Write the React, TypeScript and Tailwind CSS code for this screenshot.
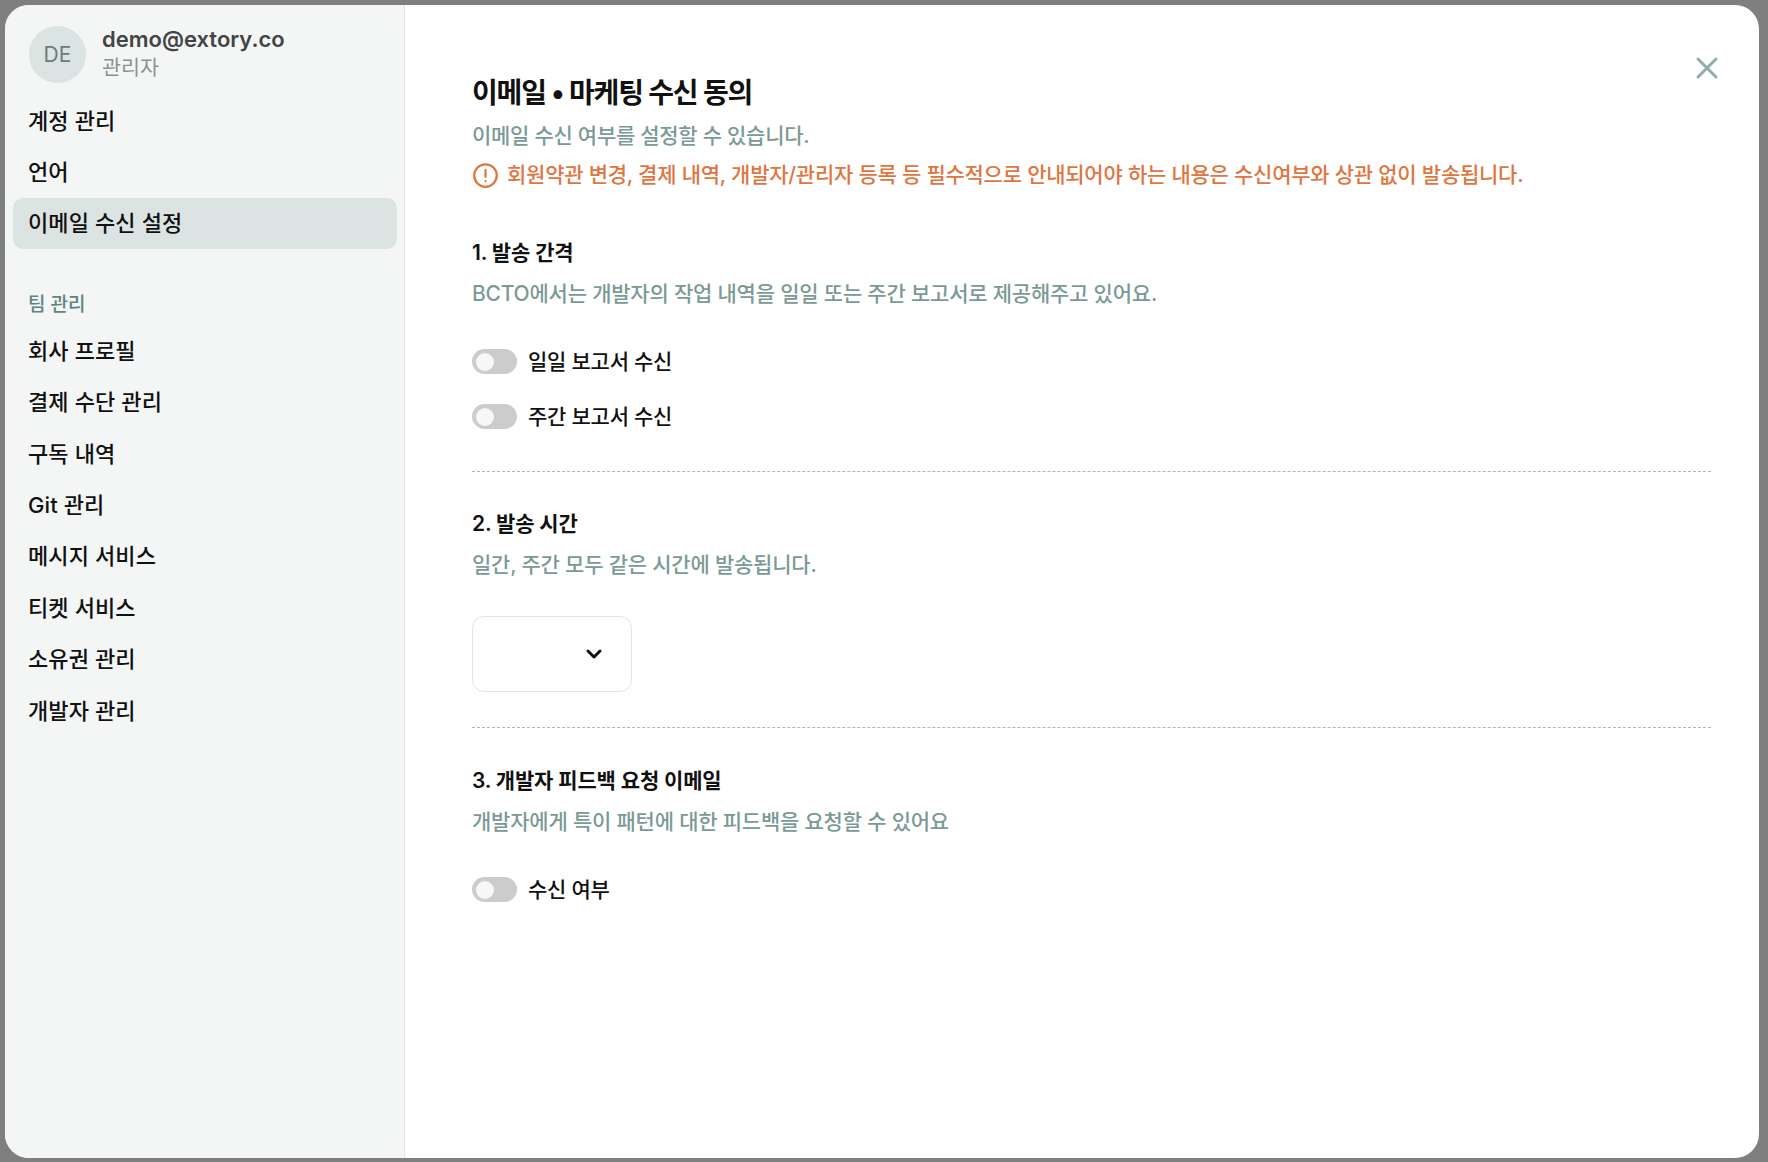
import React from 'react';
import { X, ChevronDown } from 'lucide-react';

const FONT = 'font-["Inter","Noto_Sans_CJK_KR",sans-serif]';

const accountItems = ['계정 관리', '언어', '이메일 수신 설정'];
const teamItems = ['회사 프로필', '결제 수단 관리', '구독 내역', 'Git 관리', '메시지 서비스', '티켓 서비스', '소유권 관리', '개발자 관리'];

const NavItem: React.FC<{ label: string; active?: boolean }> = ({ label, active }) => (
    <div className={`h-[51.4px] flex items-center px-[15px] pt-[1px] rounded-[10px] text-[22px] font-medium tracking-[0.1px] text-[#111] ${active ? 'bg-[#dce3e3]' : ''}`}>
        {label}
    </div>
);

const Toggle: React.FC<{ label: string }> = ({ label }) => (
    <div className="flex items-center gap-[11px] h-[25px]">
        <div className="w-[45px] h-[25px] rounded-full bg-[#cccccc] flex items-center pl-[4px]">
            <div className="w-[18px] h-[18px] rounded-full bg-[#f7f7f7]" />
        </div>
        <span className="text-[21px] font-medium tracking-[-0.25px] text-[#111]">{label}</span>
    </div>
);

const SectionHead: React.FC<{ title: string; desc: string }> = ({ title, desc }) => (
    <div>
        <h3 className="text-[21px] leading-[28px] font-semibold tracking-[-0.2px] text-[#111]">{title}</h3>
        <p className="mt-[13px] text-[21px] leading-[28px] font-medium tracking-[-0.22px] text-[#7b9a95]">{desc}</p>
    </div>
);

const App: React.FC = () => {
    return (
        <div className={`w-screen h-screen overflow-hidden bg-[#7f7f7f] p-[5px] pr-[9px] pb-[4px] ${FONT}`}>
            <div className="relative flex h-full bg-white rounded-[24px] overflow-hidden">
                <aside className="w-[400px] shrink-0 bg-[#f4f6f6] border-r border-[#dfe4e4] pl-[8px] pr-[7px]">
                    <div className="flex items-center gap-[16px] pl-[16px] pt-[21px] pb-[12px]">
                        <div className="w-[57px] h-[57px] rounded-full bg-[#dce3e3] flex items-center justify-center text-[21px] text-[#6a7b79]">DE</div>
                        <div className="-mt-[3px]">
                            <div className="text-[22px] leading-[30px] font-semibold text-[#444]">demo@extory.co</div>
                            <div className="text-[20.6px] leading-[28px] text-[#8a9391]">관리자</div>
                        </div>
                    </div>
                    {accountItems.map((item, i) => (
                        <NavItem key={item} label={item} active={i === 2} />
                    ))}
                    <div className="mt-[42px] mb-[6px] px-[15px] text-[19px] leading-[28px] font-medium text-[#5f8580]">팀 관리</div>
                    {teamItems.map((item) => (
                        <NavItem key={item} label={item} />
                    ))}
                </aside>

                <main className="flex-1 pl-[67px] pr-[48px] pt-[70px]">
                    <h1 className="text-[28px] leading-[36px] font-bold tracking-[-1.15px] text-[#111]">이메일 • 마케팅 수신 동의</h1>
                    <p className="mt-[11px] text-[21px] leading-[28px] font-medium tracking-[-0.28px] text-[#7b9a95]">이메일 수신 여부를 설정할 수 있습니다.</p>
                    <div className="mt-[11px] flex items-center gap-[8px] text-[21px] leading-[28px] font-medium tracking-[-0.24px] text-[#df7540]">
                        <svg className="w-[27px] h-[27px] shrink-0" viewBox="0 0 24 24" fill="none" stroke="currentColor" strokeWidth="2" strokeLinecap="round">
                            <circle cx="12" cy="12" r="10" />
                            <line x1="12" y1="7" x2="12" y2="13" />
                            <line x1="12" y1="17" x2="12" y2="17" />
                        </svg>
                        회원약관 변경, 결제 내역, 개발자/관리자 등록 등 필수적으로 안내되어야 하는 내용은 수신여부와 상관 없이 발송됩니다.
                    </div>

                    <div className="mt-[50px]">
                        <SectionHead title="1. 발송 간격" desc="BCTO에서는 개발자의 작업 내역을 일일 또는 주간 보고서로 제공해주고 있어요." />
                    </div>
                    <div className="mt-[41px] flex flex-col gap-[30px]">
                        <Toggle label="일일 보고서 수신" />
                        <Toggle label="주간 보고서 수신" />
                    </div>
                    <div className="mt-[42px] border-t border-dashed border-[#b5b5b5]" />

                    <div className="mt-[38px]">
                        <SectionHead title="2. 발송 시간" desc="일간, 주간 모두 같은 시간에 발송됩니다." />
                    </div>
                    <div className="mt-[37px] w-[160px] h-[76px] rounded-[12px] border border-[#e3e3e3] flex items-center justify-end pr-[25px]">
                        <ChevronDown className="w-[24px] h-[24px] text-[#111]" strokeWidth={3} />
                    </div>
                    <div className="mt-[35px] border-t border-dashed border-[#b5b5b5]" />

                    <div className="mt-[39px]">
                        <SectionHead title="3. 개발자 피드백 요청 이메일" desc="개발자에게 특이 패턴에 대한 피드백을 요청할 수 있어요" />
                    </div>
                    <div className="mt-[41px]">
                        <Toggle label="수신 여부" />
                    </div>
                </main>

                <button className="absolute top-[45px] right-[34px] text-[#8fadaa]">
                    <X className="w-[36px] h-[36px]" strokeWidth={2} />
                </button>
            </div>
        </div>
    );
};

export default App;
